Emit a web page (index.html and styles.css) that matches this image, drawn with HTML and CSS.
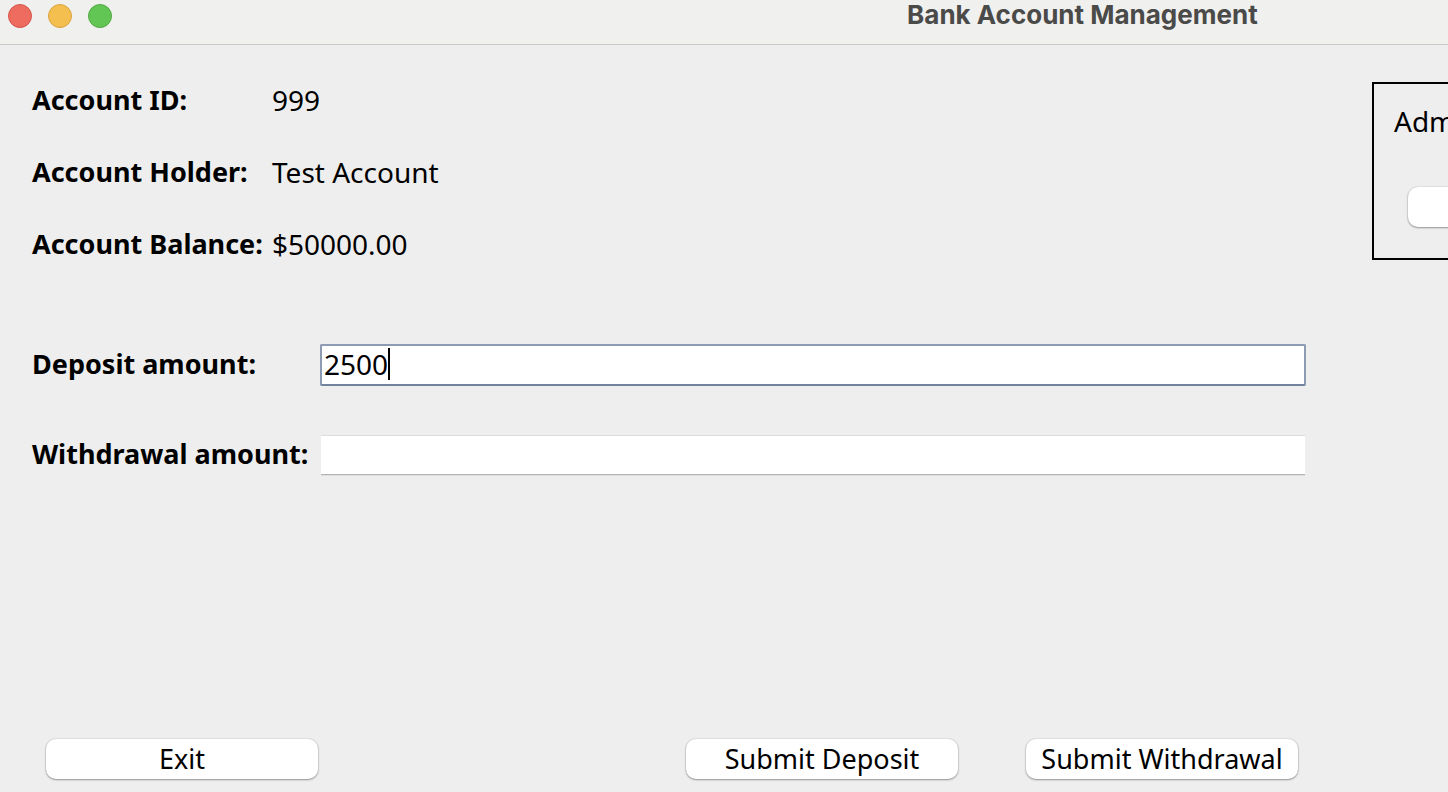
FILE: index.html
```html
<!DOCTYPE html>
<html lang="en">
<head>
<meta charset="utf-8">
<title>Bank Account Management</title>
<link rel="stylesheet" href="styles.css">
</head>
<body>
<div class="window">
  <header class="titlebar">
    <div class="lights">
      <button class="light close" type="button" aria-label="Close"></button>
      <button class="light minimize" type="button" aria-label="Minimize"></button>
      <button class="light maximize" type="button" aria-label="Maximize"></button>
    </div>
    <h1 class="title">Bank Account Management</h1>
  </header>
  <main class="content">
    <form class="account">
      <dl class="details">
        <dt>Account ID:</dt><dd>999</dd>
        <dt>Account Holder:</dt><dd>Test Account</dd>
        <dt>Account Balance:</dt><dd>$50000.00</dd>
      </dl>
      <div class="amounts">
        <label for="deposit">Deposit amount:</label>
        <div class="field">
          <input class="amount focused" id="deposit" type="text" value="2500">
          <span class="caret"></span>
        </div>
        <label for="withdrawal">Withdrawal amount:</label>
        <div class="field">
          <input class="amount" id="withdrawal" type="text">
        </div>
      </div>
      <div class="actions">
        <button class="push exit" type="button">Exit</button>
        <button class="push" type="button">Submit Deposit</button>
        <button class="push" type="button">Submit Withdrawal</button>
      </div>
    </form>
    <aside class="admin">
      <p class="admin-title">Adm</p>
      <button class="push" type="button" aria-label="Admin action"></button>
    </aside>
  </main>
</div>
</body>
</html>
```
FILE: styles.css
```css
* {
  box-sizing: border-box;
}

body {
  margin: 0;
  overflow: hidden;
  background: #eeeeee;
  color: #000;
  font: 28px/32px "Noto Sans", "Open Sans", sans-serif;
}

.window {
  display: flex;
  flex-direction: column;
  min-height: 100vh;
  overflow: hidden;
}

/* The title bar is wider than the viewport, like the window itself. */
.titlebar {
  display: grid;
  width: 149.5vw;
  height: 45px;
  background: #f0f0ee;
  border-bottom: 1px solid #c8c8c8;
}

.lights,
.title {
  grid-area: 1 / 1;
}

.lights {
  display: flex;
  gap: 16px;
  padding: 4px 8px;
}

.light {
  width: 24px;
  height: 24px;
  padding: 0;
  border: 1px solid;
  border-radius: 50%;
}

.close {
  background: #ed6b5f;
  border-color: #d5564b;
}

.minimize {
  background: #f5bf4f;
  border-color: #d9a441;
}

.maximize {
  background: #62c655;
  border-color: #52a842;
}

.title {
  justify-self: center;
  margin: 0;
  color: #4a4a49;
  font: 700 26px/30px Inter, sans-serif;
}

.content {
  display: grid;
  grid-template-columns: minmax(0, 1fr) 76px;
  column-gap: 66px;
  flex: 1;
  padding-left: 32px;
}

.account {
  display: flex;
  flex-direction: column;
  padding: 39px 0 13px;
}

.details {
  display: grid;
  grid-template-columns: 240px 1fr;
  row-gap: 40px;
  margin: 0 0 84px;
}

dt,
.amounts label {
  font-weight: 700;
  font-size: 27px;
  white-space: nowrap;
}

dd {
  margin: 0;
}

.amounts {
  display: grid;
  grid-template-columns: 288px 1fr;
  row-gap: 48px;
}

.amounts label {
  line-height: 40px;
}

.field {
  position: relative;
  display: flex;
}

.amount {
  flex: 1;
  min-width: 0;
  height: 40px;
  margin: 1px;
  padding: 0 2px;
  border: 0;
  border-top: 1px solid #dcdcdc;
  border-bottom: 1px solid #b4b4b4;
  background: #fff;
  box-shadow: 0 1px 0 #dedede;
  color: #000;
  font: inherit;
  outline: 0;
}

.focused {
  height: 42px;
  margin: 0;
  padding-bottom: 2px;
  border: 2px solid #8d9cb3;
  border-bottom-color: #73839d;
  border-radius: 2px;
  box-shadow: none;
}

.caret {
  position: absolute;
  top: 4px;
  left: calc(4px + 4ch);
  width: 2px;
  height: 32px;
  background: #000;
}

.actions {
  display: flex;
  gap: 68px;
  margin-top: auto;
  padding: 0 8px 0 14px;
}

.push {
  flex: none;
  width: 272px;
  height: 40px;
  padding: 0;
  border: 0;
  border-radius: 10px;
  background: #fff;
  box-shadow: 0 0 1px 1px rgba(0, 0, 0, 0.06), 0 1px 2px rgba(0, 0, 0, 0.35);
  color: #000;
  font: inherit;
  font-size: 27px;
}

.exit {
  margin-right: auto;
}

.admin {
  align-self: start;
  width: 344px;
  margin-top: 37px;
  padding: 21px 34px 31px;
  border: 2px solid #000;
}

.admin-title {
  margin: 0 -14px 50px;
}

.admin .push {
  display: block;
}
```
